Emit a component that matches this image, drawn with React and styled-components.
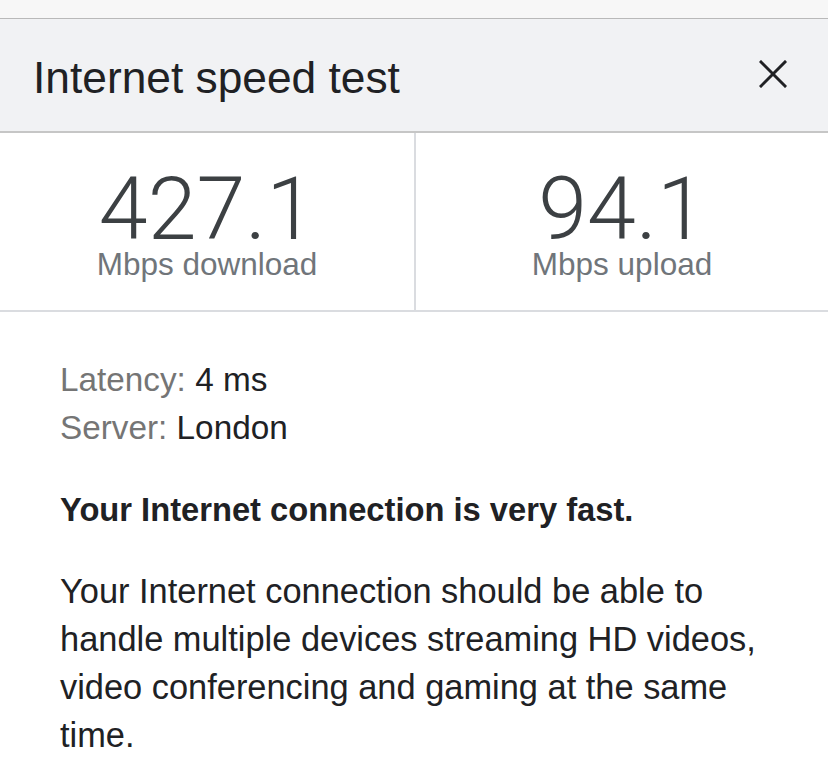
import React from "react";
import styled, { createGlobalStyle } from "styled-components";

const GlobalStyle = createGlobalStyle`
  html, body {
    margin: 0;
    padding: 0;
    background: #ffffff;
  }
  body {
    font-family: "Liberation Sans", Arial, sans-serif;
    color: #202124;
  }
`;

const Page = styled.div`
  width: 828px;
  height: 768px;
  overflow: hidden;
  background: #ffffff;
`;

const TopStrip = styled.div`
  height: 18px;
  background: #f7f7f7;
  border-bottom: 1px solid #b9b9b9;
`;

const Header = styled.div`
  height: 112px;
  display: flex;
  align-items: center;
  justify-content: space-between;
  padding: 0 40px 0 33px;
  background: #f1f2f4;
  border-bottom: 2px solid #c6c6c6;
`;

const Title = styled.h1`
  margin: 0;
  font-size: 44.3px;
  line-height: 50px;
  font-weight: 400;
  color: #202124;
  padding-top: 6px;
`;

const CloseButton = styled.button`
  width: 30px;
  height: 30px;
  padding: 0;
  border: none;
  background: none;
  display: flex;
  align-items: center;
  justify-content: center;
  margin-bottom: 3px;
`;

const Stats = styled.div`
  display: grid;
  grid-template-columns: 414px 1fr;
  height: 177px;
  border-bottom: 2px solid #dadce0;
`;

const Stat = styled.div`
  display: flex;
  flex-direction: column;
  align-items: center;
  padding-top: 38px;
  border-left: ${(p) => (p.$divider ? "2px solid #dadce0" : "none")};
`;

const Value = styled.div`
  font-family: Roboto, "Liberation Sans", sans-serif;
  font-weight: 300;
  font-size: 88px;
  line-height: 76px;
  color: #3c4043;
`;

const Unit = styled.div`
  font-size: 31.5px;
  line-height: 34px;
  color: #70757a;
  margin-top: 0;
`;

const Body = styled.div`
  padding: 44px 40px 0 60px;
`;

const Meta = styled.div`
  font-size: 33.3px;
  line-height: 48px;
`;

const MetaLabel = styled.span`
  color: #757575;
`;

const MetaValue = styled.span`
  color: #202124;
`;

const Verdict = styled.p`
  margin: 34px 0 0;
  font-size: 32.7px;
  line-height: 48px;
  font-weight: 700;
  color: #202124;
`;

const Paragraph = styled.p`
  margin: 33px 0 0;
  font-size: 34.4px;
  line-height: 48px;
  color: #202124;
`;

const CloseIcon = () => (
  <svg width="28" height="28" viewBox="0 0 28 28">
    <path d="M2 2 L26 26 M26 2 L2 26" stroke="#202124" strokeWidth="3" strokeLinecap="square" />
  </svg>
);

export default function App() {
  return (
    <Page>
      <GlobalStyle />
      <TopStrip />
      <Header>
        <Title>Internet speed test</Title>
        <CloseButton aria-label="Close">
          <CloseIcon />
        </CloseButton>
      </Header>
      <Stats>
        <Stat>
          <Value>427.1</Value>
          <Unit>Mbps download</Unit>
        </Stat>
        <Stat $divider>
          <Value>94.1</Value>
          <Unit>Mbps upload</Unit>
        </Stat>
      </Stats>
      <Body>
        <Meta>
          <MetaLabel>Latency:</MetaLabel> <MetaValue>4 ms</MetaValue>
        </Meta>
        <Meta>
          <MetaLabel>Server:</MetaLabel> <MetaValue>London</MetaValue>
        </Meta>
        <Verdict>Your Internet connection is very fast.</Verdict>
        <Paragraph>
          Your Internet connection should be able to handle multiple devices
          streaming HD videos, video conferencing and gaming at the same time.
        </Paragraph>
      </Body>
    </Page>
  );
}
